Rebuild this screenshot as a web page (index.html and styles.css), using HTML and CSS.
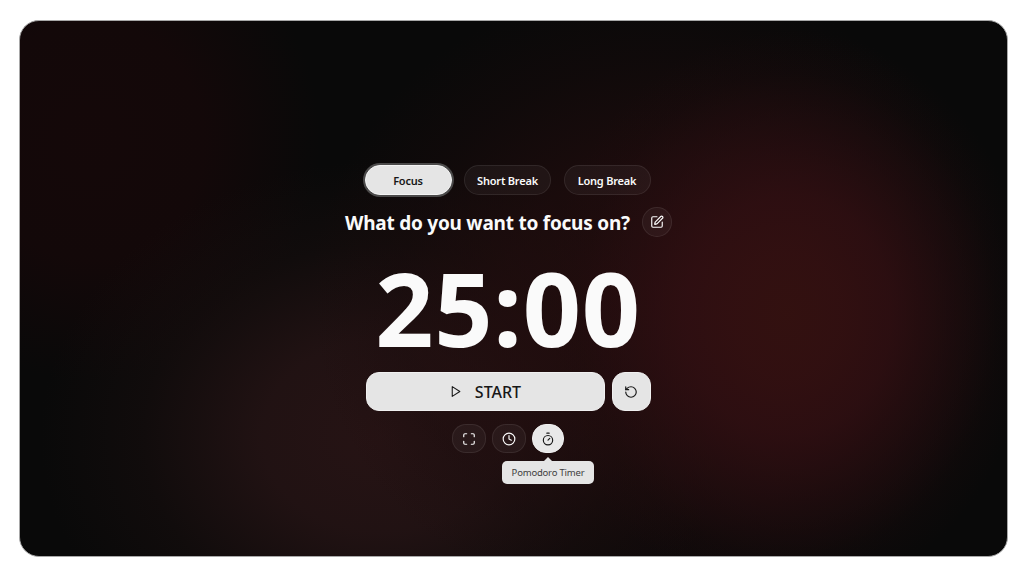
FILE: index.html
```html
<!DOCTYPE html>
<html lang="en">
<head>
<meta charset="utf-8">
<title>Pomodoro Timer</title>
<link rel="stylesheet" href="styles.css">
</head>
<body>
<main class="screen">
  <nav class="tabs">
    <button class="tab tab-active">Focus</button>
    <button class="tab">Short Break</button>
    <button class="tab">Long Break</button>
  </nav>
  <div class="task">
    <h1 class="task-title">What do you want to focus on?</h1>
    <button class="edit" aria-label="Edit">
      <svg class="icon" width="14" height="14" viewBox="0 0 24 24"><path d="M12 3H5a2 2 0 0 0-2 2v14a2 2 0 0 0 2 2h14a2 2 0 0 0 2-2v-7"/><path d="M18.375 2.625a1 1 0 0 1 3 3l-9.013 9.014a2 2 0 0 1-.853.505l-2.873.84a.5.5 0 0 1-.62-.62l.84-2.873a2 2 0 0 1 .506-.852z"/></svg>
    </button>
  </div>
  <div class="time">25:00</div>
  <div class="actions">
    <button class="start">
      <svg class="icon" width="13" height="13" viewBox="0 0 24 24"><path d="M6 3l14 9-14 9z"/></svg>
      <span class="start-label">START</span>
    </button>
    <button class="reset" aria-label="Reset">
      <svg class="icon" width="14" height="14" viewBox="0 0 24 24"><path d="M3 12a9 9 0 1 0 9-9 9.75 9.75 0 0 0-6.74 2.74L3 8"/><path d="M3 3v5h5"/></svg>
    </button>
  </div>
  <div class="tools">
    <button class="tool" aria-label="Fullscreen">
      <svg class="icon" width="14" height="14" viewBox="0 0 24 24"><path d="M8 3H5a2 2 0 0 0-2 2v3M21 8V5a2 2 0 0 0-2-2h-3M3 16v3a2 2 0 0 0 2 2h3M16 21h3a2 2 0 0 0 2-2v-3"/></svg>
    </button>
    <button class="tool" aria-label="Clock">
      <svg class="icon" width="14" height="14" viewBox="0 0 24 24"><circle cx="12" cy="12" r="10"/><path d="M12 6v6l4 2"/></svg>
    </button>
    <button class="tool tool-active" aria-label="Pomodoro Timer">
      <svg class="icon" width="14" height="14" viewBox="0 0 24 24"><path d="M10 2h4M12 14l3-3"/><circle cx="12" cy="14" r="8"/></svg>
      <span class="tooltip">Pomodoro Timer</span>
    </button>
  </div>
</main>
</body>
</html>
```
FILE: styles.css
```css
* { box-sizing: border-box; }
body {
  margin: 0;
  padding: 20px 16px 19px 19px;
  height: 576px;
  background: #fff;
  font-family: "Noto Sans", "Open Sans", sans-serif;
  color: #fafafa;
  overflow: hidden;
}
button {
  display: flex;
  align-items: center;
  justify-content: center;
  padding: 0;
  font-family: inherit;
  color: inherit;
  background: rgba(255, 255, 255, 0.045);
  border: 1px solid rgba(255, 255, 255, 0.08);
}
.screen {
  height: 537px;
  padding: 144px 0 0 0;
  display: flex;
  flex-direction: column;
  align-items: center;
  border: 1px solid #a8a8a8;
  border-radius: 20px;
  background:
    radial-gradient(ellipse 245px 285px at 768px 294px, rgba(52, 17, 16, 0.95) 0%, rgba(51, 16, 17, 0.92) 22%, rgba(49, 15, 18, 0.82) 42%, rgba(43, 14, 17, 0.5) 66%, rgba(34, 12, 14, 0.2) 85%, transparent 100%),
    radial-gradient(ellipse 350px 320px at 640px 280px, rgba(42, 14, 15, 0.75) 0%, rgba(37, 13, 14, 0.6) 45%, rgba(28, 11, 12, 0.35) 75%, transparent 100%),
    radial-gradient(ellipse 340px 275px at 360px 415px, rgba(40, 20, 21, 0.95) 0%, rgba(38, 20, 21, 0.82) 35%, rgba(28, 16, 16, 0.4) 70%, transparent 100%),
    radial-gradient(ellipse 230px 240px at 70px 120px, rgba(21, 8, 9, 0.95) 0%, rgba(20, 8, 9, 0.9) 50%, transparent 100%),
    #090909;
}
.icon {
  display: block;
  flex: none;
  fill: none;
  stroke: currentColor;
  stroke-width: 2;
  stroke-linecap: round;
  stroke-linejoin: round;
}
.tabs {
  display: flex;
  gap: 12.5px;
  margin-right: 12px;
}
.tab {
  width: 87px;
  height: 30px;
  border-radius: 15px;
  font-size: 11px;
  font-weight: 600;
  letter-spacing: -0.2px;
}
.tab-active {
  background: #e5e5e5;
  border-color: #f4f4f4;
  color: #171717;
  box-shadow: 0 0 0 2px #4b4a4a;
}
.task {
  display: flex;
  align-items: center;
  gap: 12px;
  margin: 12px 0 0 -10px;
}
.task-title {
  margin: 0;
  width: 285px;
  padding-top: 2px;
  font-size: 19px;
  line-height: 28px;
  font-weight: 700;
  letter-spacing: -0.23px;
  white-space: nowrap;
}
.edit {
  width: 30px;
  height: 30px;
  border-radius: 50%;
}
.time {
  height: 135px;
  margin-right: 11px;
  font-size: 102px;
  font-weight: 700;
  line-height: 142px;
  letter-spacing: 0.7px;
}
.actions {
  display: flex;
  gap: 7px;
  margin-right: 11px;
}
.start, .reset {
  height: 39px;
  border-radius: 13px;
  background: #e5e5e5;
  border-color: #f0f0f0;
  color: #171717;
}
.start {
  width: 239px;
  gap: 13px;
}
.start-label {
  font-size: 16px;
  font-weight: 500;
}
.reset { width: 39px; }
.tools {
  display: flex;
  gap: 6px;
  margin: 13px 11px 0 0;
}
.tool {
  width: 34px;
  height: 29px;
  border-radius: 14px;
  position: relative;
}
.tool-active {
  width: 32px;
  background: #e8e8e8;
  border-color: #f0f0f0;
  color: #171717;
}
.tooltip {
  position: absolute;
  top: 36px;
  left: 50%;
  width: 92px;
  height: 23px;
  transform: translateX(-50%);
  border-radius: 5px;
  background: #e5e5e5;
  color: #404040;
  font-size: 9.5px;
  letter-spacing: -0.2px;
  line-height: 24px;
  text-align: center;
  white-space: nowrap;
}
.tooltip::before {
  content: "";
  position: absolute;
  left: 50%;
  top: -4px;
  margin-left: -5px;
  border: 5px solid transparent;
  border-top: 0;
  border-bottom-color: #e5e5e5;
}
```
